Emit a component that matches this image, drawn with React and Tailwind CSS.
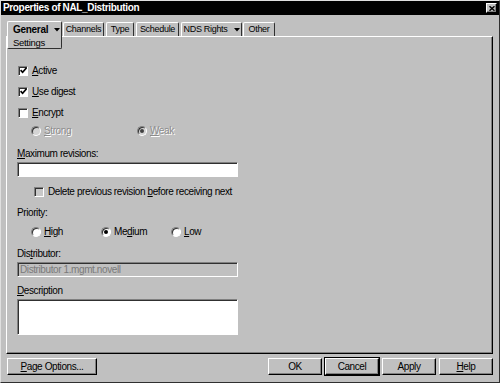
import React from 'react';

const sunken =
  'border border-t-[#808080] border-l-[#808080] border-r-white border-b-white shadow-[inset_1px_1px_0_#303030]';
const raised =
  'border border-t-white border-l-white border-r-black border-b-black shadow-[inset_-1px_-1px_0_#808080]';

function Checkbox({ checked, dim }) {
  return (
    <span
      className={`w-[10px] h-[10px] shrink-0 flex items-center justify-center ${sunken} ${
        dim ? 'bg-[#c8c8c8]' : 'bg-white'
      }`}
    >
      {checked && (
        <svg width="7" height="7" viewBox="0 0 7 7">
          <path d="M0.6 3.2 L2.6 5.3 L6.5 0.9" stroke="#000" strokeWidth="1.7" fill="none" />
        </svg>
      )}
    </span>
  );
}

function Radio({ on, disabled }) {
  return (
    <span
      className={`w-[10px] h-[10px] shrink-0 rounded-full flex items-center justify-center ${sunken} ${
        disabled ? 'bg-[#d4d4d4]' : 'bg-white'
      }`}
    >
      {on && <span className={`w-[4px] h-[4px] rounded-full ${disabled ? 'bg-[#404040]' : 'bg-black'}`} />}
    </span>
  );
}

function Arrow() {
  return (
    <svg width="6" height="4" viewBox="0 0 6 4" className="inline-block">
      <path d="M0 0 H6 L3 3.5 Z" fill="#000" />
    </svg>
  );
}

function Tab({ className, children }) {
  return (
    <div
      className={`mt-[1px] h-[14px] flex items-center justify-center gap-[6px] rounded-t-[2px] border-t border-l border-r border-t-white border-l-white border-r-[#303030] text-[9px] tracking-[-0.3px] ${className}`}
    >
      {children}
    </div>
  );
}

function Button({ className, children, isDefault }) {
  return (
    <button
      className={`h-[17px] flex items-center justify-center bg-[#c0c0c0] ${
        isDefault ? 'outline outline-1 outline-black' : ''
      } ${raised} ${className}`}
    >
      {children}
    </button>
  );
}

export default function App() {
  return (
    <div className="w-[500px] h-[383px] bg-[#c0c0c0] border border-t-[#dfdfdf] border-l-[#dfdfdf] border-r-[#303030] border-b-[#303030] flex flex-col font-['Liberation_Sans',Arial,sans-serif] text-[10px] tracking-[-0.4px] text-black leading-none select-none">
      {/* Title bar */}
      <div className="h-[14px] bg-black flex items-center justify-between pl-[2px] pr-[2px]">
        <span className="text-white font-bold tracking-[-0.35px]">Properties of NAL_Distribution</span>
        <span className={`w-[11px] h-[10px] bg-[#c0c0c0] flex items-center justify-center ${raised}`}>
          <svg width="6" height="5" viewBox="0 0 6 5">
            <path d="M0.5 0.3 L5.5 4.7 M5.5 0.3 L0.5 4.7" stroke="#000" strokeWidth="1.5" />
          </svg>
        </span>
      </div>

      {/* Tabs */}
      <div className="mt-[6px] h-[15px] flex items-start pl-[6px]">
        <div className="relative z-10 w-[55px] h-[28px] bg-[#c0c0c0] rounded-[2px] border border-t-white border-l-white border-r-[#303030] border-b-[#303030] pl-[5px] pt-[2px] leading-[12.5px] tracking-[-0.3px]">
          <div className="flex items-center gap-[6px] font-bold">
            General <Arrow />
          </div>
          <div className="text-[9.5px]">Settings</div>
        </div>
        <Tab className="ml-[1px] w-[41px]">Channels</Tab>
        <Tab className="ml-[2px] w-[28px]">Type</Tab>
        <Tab className="ml-[2px] w-[43px]">Schedule</Tab>
        <Tab className="ml-[2px] w-[61px]">
          <span>NDS Rights</span>
          <Arrow />
        </Tab>
        <Tab className="ml-[1px] w-[32px]">Other</Tab>
      </div>

      {/* Panel */}
      <div className="ml-[5px] w-[487px] h-[318px] border border-t-white border-l-white border-r-black border-b-black shadow-[inset_-1px_-1px_0_#808080] flex flex-col pl-[10px] pt-[23px]">
        <div className="h-[21px] flex items-center gap-[4px] pl-[1px]">
          <Checkbox checked />
          <span><u>A</u>ctive</span>
        </div>
        <div className="h-[21px] flex items-center gap-[4px] pl-[1px]">
          <Checkbox checked />
          <span><u>U</u>se digest</span>
        </div>
        <div className="h-[21px] flex items-center gap-[4px] pl-[1px]">
          <Checkbox />
          <span><u>E</u>ncrypt</span>
        </div>
        <div className="h-[16px] flex items-center pl-[14px] text-[#8c8c8c] [text-shadow:1px_1px_0_#fff]">
          <div className="w-[106px] flex items-center gap-[3px]">
            <Radio disabled />
            <span><u>S</u>trong</span>
          </div>
          <div className="flex items-center gap-[3px]">
            <Radio on disabled />
            <span><u>W</u>eak</span>
          </div>
        </div>

        <div className="mt-[7px] h-[16px] flex items-center">
          <span><u>M</u>aximum revisions:</span>
        </div>
        <div className={`w-[221px] h-[15px] bg-white ${sunken}`} />

        <div className="mt-[7px] h-[16px] flex items-center gap-[4px] pl-[17px]">
          <Checkbox dim />
          <span>Delete previous revision <u>b</u>efore receiving next</span>
        </div>

        <div className="mt-[5px] h-[15px] flex items-center">
          <span>Priority:</span>
        </div>
        <div className="mt-[4px] h-[16px] flex items-center pl-[14px]">
          <div className="w-[70px] flex items-center gap-[3px]">
            <Radio />
            <span><u>H</u>igh</span>
          </div>
          <div className="w-[70px] flex items-center gap-[3px]">
            <Radio on />
            <span>Me<u>d</u>ium</span>
          </div>
          <div className="flex items-center gap-[3px]">
            <Radio />
            <span><u>L</u>ow</span>
          </div>
        </div>

        <div className="mt-[6px] h-[16px] flex items-center">
          <span>Dis<u>t</u>ributor:</span>
        </div>
        <div className={`w-[221px] h-[15px] bg-[#c0c0c0] flex items-center pl-[2px] text-[#7a7a7a] ${sunken}`}>
          Distributor 1.mgmt.novell
        </div>

        <div className="mt-[6px] h-[16px] flex items-center">
          <span><u>D</u>escription</span>
        </div>
        <div className={`w-[221px] h-[36px] bg-white ${sunken}`} />
      </div>

      {/* Bottom buttons */}
      <div className="mt-[4px] ml-[6px] w-[486px] flex items-center justify-between">
        <Button className="w-[90px]">
          <span><u>P</u>age Options...</span>
        </Button>
        <div className="flex items-center gap-[3px]">
          <Button className="w-[54px]">OK</Button>
          <Button className="w-[54px]" isDefault>Cancel</Button>
          <Button className="w-[54px]">Apply</Button>
          <Button className="w-[54px]">
            <span><u>H</u>elp</span>
          </Button>
        </div>
      </div>
    </div>
  );
}
